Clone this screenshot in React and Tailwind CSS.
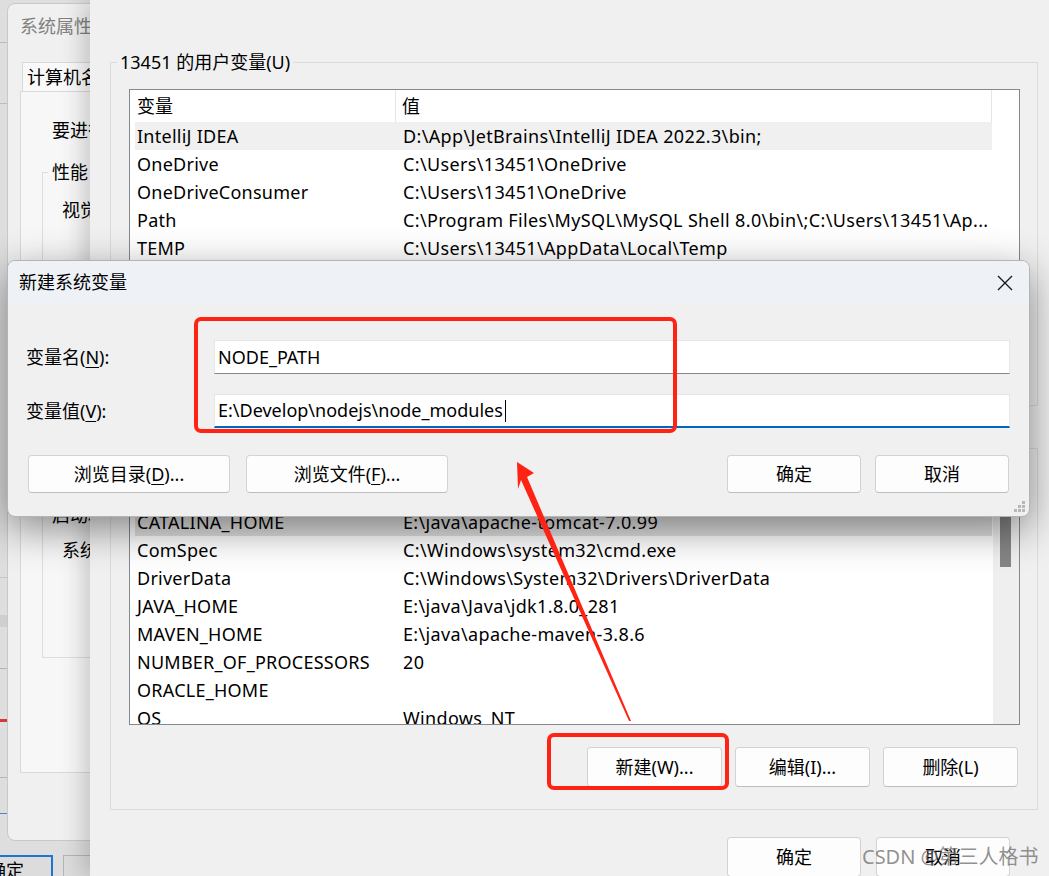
import React from "react";

const userVars = [
  ["IntelliJ IDEA", "D:\\App\\JetBrains\\IntelliJ IDEA 2022.3\\bin;"],
  ["OneDrive", "C:\\Users\\13451\\OneDrive"],
  ["OneDriveConsumer", "C:\\Users\\13451\\OneDrive"],
  ["Path", "C:\\Program Files\\MySQL\\MySQL Shell 8.0\\bin\\;C:\\Users\\13451\\Ap..."],
  ["TEMP", "C:\\Users\\13451\\AppData\\Local\\Temp"],
  ["TMP", "C:\\Users\\13451\\AppData\\Local\\Temp"],
];

const sysVars = [
  ["CATALINA_HOME", "E:\\java\\apache-tomcat-7.0.99"],
  ["ComSpec", "C:\\Windows\\system32\\cmd.exe"],
  ["DriverData", "C:\\Windows\\System32\\Drivers\\DriverData"],
  ["JAVA_HOME", "E:\\java\\Java\\jdk1.8.0_281"],
  ["MAVEN_HOME", "E:\\java\\apache-maven-3.8.6"],
  ["NUMBER_OF_PROCESSORS", "20"],
  ["ORACLE_HOME", ""],
  ["OS", "Windows_NT"],
];

const Btn = ({ children, className = "" }) => (
  <div
    className={`flex items-center justify-center rounded-[4px] border border-[#d3d3d3] border-b-[#bdbdbd] bg-[#fdfdfd] text-[18px] text-black ${className}`}
  >
    {children}
  </div>
);

const VarList = ({ rows, selected, scrollbar }) => (
  <div className="flex h-[250px] overflow-hidden border border-[#828790] bg-white">
    <div className="w-[863px]">
      <div className="flex h-[32px] w-[862px] items-center border-r border-[#e5e5e5] text-[18px]">
        <div className="flex h-full w-[266px] items-center border-r border-[#e5e5e5] pl-[7px]">变量</div>
        <div className="pl-[6px]">值</div>
      </div>
      {rows.map(([k, v], i) => (
        <div
          key={k}
          className={`ml-[5px] flex h-[28px] w-[857px] items-center whitespace-nowrap text-[18px] leading-[28px] tracking-[0.25px] ${
            i === 0 ? selected : ""
          }`}
        >
          <div className="w-[268px] pl-[2px]">{k}</div>
          <div className="tracking-[0.35px]">{v}</div>
        </div>
      ))}
    </div>
    {scrollbar && (
      <div className="w-[26px] bg-[#efefef] pl-[7px] pt-[29px]">
        <div className="h-[62px] w-[11px] bg-[#858585]" />
      </div>
    )}
  </div>
);

export default function App() {
  return (
    <div className="relative h-[876px] w-[1049px] overflow-hidden bg-[#dedede] font-['Noto_Sans','Noto_Sans_CJK_SC',sans-serif] text-black">
      {/* desktop behind */}
      <div className="absolute left-0 top-[42px] h-[1px] w-[8px] bg-[#bdbdbd]" />
      <div className="absolute left-0 top-[103px] h-[1px] w-[8px] bg-[#bdbdbd]" />
      <div className="absolute left-0 top-[577px] h-[1px] w-[8px] bg-[#c4c4c4]" />
      <div className="absolute left-0 top-[615px] h-[12px] w-[8px] bg-[#cfcfcf]" />
      <div className="absolute left-0 top-[668px] h-[1px] w-[8px] bg-[#b5b5b5]" />
      <div className="absolute left-0 top-[719px] h-[3px] w-[8px] bg-[#d23a3a]" />
      <div className="absolute left-0 top-[777px] h-[1px] w-[8px] bg-[#b5b5b5]" />
      <div className="absolute left-0 top-[813px] h-[1px] w-[8px] bg-[#3c8ad8]" />
      <div className="absolute left-[-30px] top-[855px] flex h-[40px] w-[83px] items-start justify-end border-2 border-[#1f74d0] bg-[#dcdcdc] pr-[27px] text-[18px]">
        确定
      </div>
      <div className="absolute left-[63px] top-[855px] h-[40px] w-[60px] border border-[#b5b5b5] bg-[#dcdcdc]" />

      {/* 系统属性 window */}
      <div className="absolute left-[7px] top-[3px] flex h-[838px] w-[320px] flex-col rounded-[8px] border border-[#c9c9c9] bg-[#f0f0f0] px-[12px]">
        <div className="flex h-[45px] items-center text-[18px] text-[#808080]">系统属性</div>
        <div className="ml-[2px] mt-[13px] flex h-[29px] w-[120px] items-center border border-b-0 border-[#d9d9d9] bg-[#f9f9f9] pl-[4px] text-[18px]">
          计算机名
        </div>
        <div className="flex h-[682px] flex-col border border-[#d9d9d9] bg-[#f7f7f7] pl-[21px] text-[18px]">
          <div className="ml-[10px] mt-[26px] whitespace-nowrap leading-[24px]">要进行大多数更改，你必须作为管理员登录。</div>
          <div className="relative mt-[30px] h-[318px] border-l border-t border-[#dcdcdc] pl-[19px] pt-[25px]">
            <div className="absolute left-[5px] top-[-13px] bg-[#f7f7f7] px-[4px] leading-[24px]">性能</div>
            <div className="whitespace-nowrap leading-[24px]">视觉效果，处理器计划，内存使用</div>
          </div>
          <div className="relative mt-[25px] h-[143px] border-b border-l border-t border-[#dcdcdc] pl-[19px] pt-[22px]">
            <div className="absolute left-[5px] top-[-13px] bg-[#f7f7f7] px-[4px] leading-[24px]">启动和故障恢复</div>
            <div className="whitespace-nowrap leading-[24px]">系统启动、系统故障和调试信息</div>
          </div>
        </div>
      </div>

      {/* 环境变量 window */}
      <div className="absolute left-[90px] top-0 flex h-[876px] w-[959px] flex-col bg-[#f0f0f0] pl-[20px] pr-[11px] shadow-[-6px_0_22px_rgba(0,0,0,0.2)]">
        <div className="relative mt-[62px] border border-[#dcdcdc] pb-[14px] pl-[18px] pr-[17px] pt-[26px]">
          <div className="absolute left-[6px] top-[-13px] bg-[#f0f0f0] px-[3px] text-[18px] leading-[24px]">13451 的用户变量(U)</div>
          <VarList rows={userVars} selected="bg-[#f0f0f0]" />
          <div className="mr-[2px] mt-[12px] flex h-[40px] justify-end gap-[13px]">
            <Btn className="w-[135px]">新建(N)...</Btn>
            <Btn className="w-[135px]">编辑(E)...</Btn>
            <Btn className="w-[135px]">删除(D)</Btn>
          </div>
        </div>
        <div className="relative mt-[42px] border border-[#dcdcdc] pb-[22px] pl-[18px] pr-[17px] pt-[26px]">
          <div className="absolute left-[6px] top-[-13px] bg-[#f0f0f0] px-[3px] text-[18px] leading-[24px]">系统变量(S)</div>
          <VarList rows={sysVars} selected="bg-[#e2e2e2]" scrollbar />
          <div className="mr-[2px] mt-[22px] flex h-[40px] justify-end gap-[13px]">
            <Btn className="w-[135px]">新建(W)...</Btn>
            <Btn className="w-[135px]">编辑(I)...</Btn>
            <Btn className="w-[135px]">删除(L)</Btn>
          </div>
        </div>
        <div className="mt-[27px] flex justify-end gap-[15px] pr-[28px]">
          <Btn className="h-[40px] w-[134px]">确定</Btn>
          <Btn className="h-[40px] w-[134px]">取消</Btn>
        </div>
      </div>

      {/* 新建系统变量 dialog */}
      <div className="absolute left-[7px] top-[260px] flex h-[257px] w-[1023px] flex-col overflow-hidden rounded-[8px] border border-[#b4b4b4] bg-[#f0f0f0] shadow-[0_12px_40px_rgba(0,0,0,0.45)]">
        <div className="flex h-[43px] items-center justify-between bg-[#eef2f7] pl-[11px] pr-[16px]">
          <span className="text-[18px]">新建系统变量</span>
          <svg width="16" height="16" viewBox="0 0 16 16">
            <path d="M1 1L15 15M15 1L1 15" stroke="#1b1b1b" strokeWidth="1.4" fill="none" />
          </svg>
        </div>
        <div className="flex flex-col pl-[18px] pr-[19px] pt-[36px] text-[18px]">
          <div className="flex h-[34px] items-center">
            <div className="w-[188px]">
              变量名(<span className="underline underline-offset-[3px]">N</span>):
            </div>
            <div className="flex h-[34px] flex-1 items-center border border-[#e6e6e6] border-b-[#868686] bg-white pl-[3px]">NODE_PATH</div>
          </div>
          <div className="mt-[20px] flex h-[34px] items-center">
            <div className="w-[188px]">
              变量值(<span className="underline underline-offset-[3px]">V</span>):
            </div>
            <div className="flex h-[34px] flex-1 items-center border border-[#e6e6e6] border-b-2 border-b-[#0067c0] bg-white pl-[3px]">
              E:\Develop\nodejs\node_modules
              <span className="ml-[2px] inline-block h-[22px] w-[1px] bg-black" />
            </div>
          </div>
        </div>
        <div className="mt-[27px] flex items-center pl-[20px] pr-[20px]">
          <Btn className="h-[38px] w-[202px]">
            浏览目录(<span className="underline underline-offset-[3px]">D</span>)...
          </Btn>
          <Btn className="ml-[16px] h-[38px] w-[202px]">
            浏览文件(<span className="underline underline-offset-[3px]">F</span>)...
          </Btn>
          <Btn className="ml-auto h-[38px] w-[134px]">确定</Btn>
          <Btn className="ml-[14px] h-[38px] w-[134px]">取消</Btn>
        </div>
        <svg className="absolute bottom-[3px] right-[3px]" width="12" height="12" viewBox="0 0 12 12">
          <g fill="#b8b8b8">
            <rect x="8" y="0" width="3" height="3" />
            <rect x="4" y="4" width="3" height="3" />
            <rect x="8" y="4" width="3" height="3" />
            <rect x="0" y="8" width="3" height="3" />
            <rect x="4" y="8" width="3" height="3" />
            <rect x="8" y="8" width="3" height="3" />
          </g>
        </svg>
      </div>

      {/* red annotations */}
      <svg className="pointer-events-none absolute left-0 top-0" width="1049" height="876" viewBox="0 0 1049 876">
        <rect x="196" y="319" width="479" height="112" rx="5" fill="none" stroke="#ff2314" strokeWidth="4" />
        <rect x="549" y="735" width="178" height="53" rx="5" fill="none" stroke="#ff2314" strokeWidth="4" />
        <polygon points="517,462 534,473 527,477 631,721 629,721 521,480 518,489" fill="#ff2314" />
      </svg>

      {/* watermark */}
      <div className="absolute left-[862px] top-[843px] whitespace-nowrap text-[20px] leading-[28px] text-[rgba(110,110,110,0.75)]">
        CSDN @第三人格书
      </div>
    </div>
  );
}
